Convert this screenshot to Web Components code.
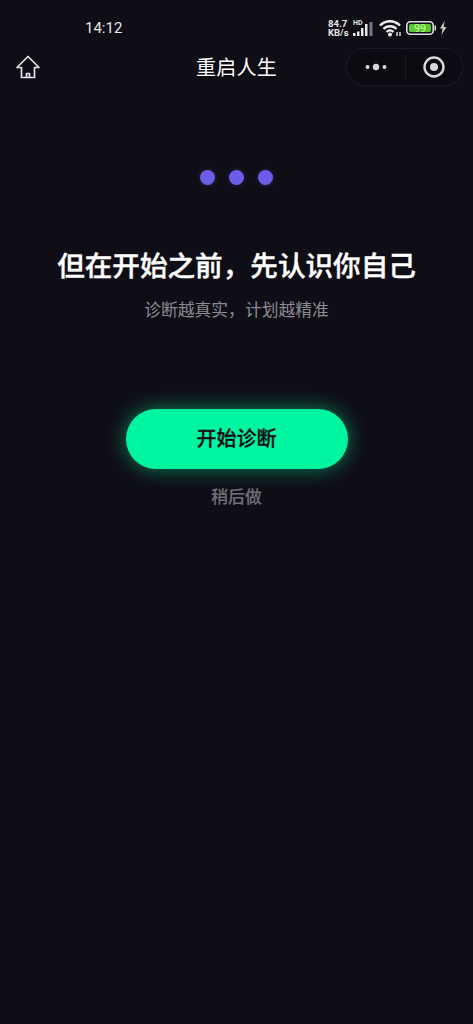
<!DOCTYPE html>
<html lang="zh">
<head>
<meta charset="utf-8">
<title>重启人生</title>
<style>
    html, body {
        margin: 0;
        height: 100%;
        background: #0f0e16;
        font-family: "Noto Sans CJK SC", "Liberation Sans", sans-serif;
    }
</style>
</head>
<body>
<intro-page>
    <status-bar time="14:12"></status-bar>
    <nav-bar title="重启人生"></nav-bar>
    <step-dots></step-dots>
    <h-title>但在开始之前，先认识你自己</h-title>
    <sub-title>诊断越真实，计划越精准</sub-title>
    <start-button>开始诊断</start-button>
    <later-link>稍后做</later-link>
</intro-page>

<script>
window.customElements.define("intro-page", class IntroPage extends HTMLElement {
    constructor() {
        super();
        this.attachShadow({ mode: "open" });
        this.shadowRoot.innerHTML = `
            <style>
                :host {
                    display: flex;
                    flex-direction: column;
                    align-items: stretch;
                    width: 473px;
                    height: 1024px;
                    overflow: hidden;
                    background: #0f0e16;
                }
            </style>
            <slot></slot>
        `;
    };
});

window.customElements.define("status-bar", class StatusBar extends HTMLElement {
    constructor() {
        super();
        this.attachShadow({ mode: "open" });
        this.shadowRoot.innerHTML = `
            <style>
                :host {
                    display: flex;
                    align-items: center;
                    height: 43px;
                    padding: 12px 0 0 85px;
                    box-sizing: border-box;
                    color: #e6e6e8;
                    font-family: Roboto, "Liberation Sans", sans-serif;
                }
                .time { font-size: 15px; width: 243px; }
                .speed { font-size: 9.500px; font-weight: 700; line-height: 9px; width: 25px; }
                svg { display: block; }
            </style>
            <span class="time">${this.getAttribute("time")}</span>
            <span class="speed">84.7<br>KB/s</span>
            <svg width="22" height="18" viewBox="0 0 22 18">
                <text x="0" y="6" font-size="7" font-weight="700" fill="#e6e6e8" font-family="Roboto, sans-serif">HD</text>
                <g fill="#e6e6e8">
                    <rect x="0" y="14" width="2.500" height="3"/>
                    <rect x="4" y="12.500" width="2.500" height="4.500"/>
                    <rect x="8" y="9" width="2.500" height="8"/>
                    <rect x="12" y="5" width="2.500" height="12"/>
                    <rect x="16.500" y="3" width="3" height="14" fill="#77777c"/>
                </g>
            </svg>
            <svg width="24" height="18" viewBox="0 0 24 18" style="margin-left:4px">
                <g fill="none" stroke="#f0f0f2" stroke-width="2.400">
                    <path d="M1 6.500 A14 14 0 0 1 21 6.500"/>
                    <path d="M4.500 10 A9 9 0 0 1 17.500 10"/>
                    <path d="M7.500 13 A5 5 0 0 1 14.500 13"/>
                </g>
                <circle cx="11" cy="15.500" r="2" fill="#f0f0f2"/>
                <path d="M18 17V13M21 17V13" stroke="#d8d8da" stroke-width="1.500"/>
            </svg>
            <svg width="30" height="14" viewBox="0 0 30 14" style="margin-left:3px">
                <rect x="0.800" y="0.800" width="26.400" height="12.400" rx="3.500" fill="none" stroke="#e0e0e2" stroke-width="1.600"/>
                <rect x="3" y="3" width="22" height="8" rx="1.500" fill="#55c92e"/>
                <text x="14" y="10.800" font-size="10.500" text-anchor="middle" fill="#d4f7a0" font-family="Roboto, sans-serif">99</text>
                <rect x="28.500" y="4.500" width="1.500" height="5" fill="#d8d8da"/>
            </svg>
            <svg width="8" height="14" viewBox="0 0 8 14" style="margin-left:3px">
                <path d="M5.500 0 L1 7.500 H3.500 L2.500 14 L7.500 6 H4.800 Z" fill="#c8c8ca"/>
            </svg>
        `;
    };
});

window.customElements.define("nav-bar", class NavBar extends HTMLElement {
    constructor() {
        super();
        this.attachShadow({ mode: "open" });
        this.shadowRoot.innerHTML = `
            <style>
                :host {
                    display: grid;
                    grid-template-columns: 1fr auto 1fr;
                    align-items: center;
                    height: 48px;
                    padding: 0 10px;
                    color: #fff;
                }
                .home { margin-left: 6px; }
                .title { font-size: 20px; line-height: 24px; letter-spacing: 0.2px; }
                .capsule {
                    justify-self: end;
                    display: flex;
                    align-items: center;
                    width: 117px;
                    height: 38px;
                    box-sizing: border-box;
                    border: 1px solid #1c1b25;
                    border-radius: 19px;
                    background: #0c0b12;
                }
                .capsule > div { display: flex; justify-content: center; align-items: center; }
                .more { width: 58px; }
                .sep { width: 1px; height: 24px; background: #1c1b25; }
                .close { flex: 1; }
                svg { display: block; }
            </style>
            <svg class="home" width="24" height="24" viewBox="0 0 24 24" fill="none" stroke="#e4e4e8" stroke-width="1.700" stroke-linejoin="round">
                <path d="M12 1.500 L23 12.500 H18.500 V22.500 H5.500 V12.500 H1 Z"/>
                <path d="M10.500 22.500 V18.500 H13.500 V22.500"/>
            </svg>
            <span class="title">${this.getAttribute("title")}</span>
            <div class="capsule">
                <div class="more">
                    <svg width="24" height="8" viewBox="0 0 24 8" fill="#d8d8dc">
                        <circle cx="3.500" cy="4" r="2"/>
                        <circle cx="12" cy="4" r="3.200"/>
                        <circle cx="20.500" cy="4" r="2"/>
                    </svg>
                </div>
                <div class="sep"></div>
                <div class="close">
                    <svg width="22" height="22" viewBox="0 0 22 22">
                        <circle cx="11" cy="11" r="9.500" fill="none" stroke="#d8d8dc" stroke-width="2.400"/>
                        <circle cx="11" cy="11" r="4" fill="#d8d8dc"/>
                    </svg>
                </div>
            </div>
        `;
    };
});

window.customElements.define("step-dots", class StepDots extends HTMLElement {
    constructor() {
        super();
        this.attachShadow({ mode: "open" });
        this.shadowRoot.innerHTML = `
            <style>
                :host {
                    display: flex;
                    justify-content: center;
                    gap: 14px;
                    margin-top: 79px;
                }
                i {
                    width: 15px;
                    height: 15px;
                    border-radius: 50%;
                    background: #6c5ce7;
                    box-shadow: 0 0 5px rgba(108, 92, 231, 0.3);
                }
            </style>
            <i></i><i></i><i></i>
        `;
    };
});

window.customElements.define("h-title", class HTitle extends HTMLElement {
    constructor() {
        super();
        this.attachShadow({ mode: "open" });
        this.shadowRoot.innerHTML = `
            <style>
                :host {
                    display: block;
                    margin-top: 59px;
                    text-align: center;
                    color: #fff;
                    font-size: 27.600px;
                    font-weight: 500;
                    -webkit-text-stroke: 0.4px #fff;
                    line-height: 40px;
                }
            </style>
            <slot></slot>
        `;
    };
});

window.customElements.define("sub-title", class SubTitle extends HTMLElement {
    constructor() {
        super();
        this.attachShadow({ mode: "open" });
        this.shadowRoot.innerHTML = `
            <style>
                :host {
                    display: block;
                    margin-top: 13px;
                    text-align: center;
                    color: #8c8b92;
                    font-size: 16.800px;
                    line-height: 24px;
                }
            </style>
            <slot></slot>
        `;
    };
});

window.customElements.define("start-button", class StartButton extends HTMLElement {
    constructor() {
        super();
        this.attachShadow({ mode: "open" });
        this.shadowRoot.innerHTML = `
            <style>
                :host {
                    display: flex;
                    align-self: center;
                    align-items: center;
                    justify-content: center;
                    width: 222px;
                    height: 60px;
                    padding-bottom: 3px;
                    box-sizing: border-box;
                    margin-top: 88px;
                    border-radius: 30px;
                    background: #00f5a0;
                    box-shadow: 0 0 20px rgba(0, 245, 160, 0.5);
                    color: #0f0e16;
                    font-size: 20px;
                    font-weight: 500;
                    -webkit-text-stroke: 0.3px #0f0e16;
                }
            </style>
            <slot></slot>
        `;
    };
});

window.customElements.define("later-link", class LaterLink extends HTMLElement {
    constructor() {
        super();
        this.attachShadow({ mode: "open" });
        this.shadowRoot.innerHTML = `
            <style>
                :host {
                    display: block;
                    margin-top: 15px;
                    text-align: center;
                    color: #706f77;
                    font-size: 16.800px;
                    font-weight: 500;
                    -webkit-text-stroke: 0.2px #706f77;
                    line-height: 24px;
                }
            </style>
            <slot></slot>
        `;
    };
});
</script>
</body>
</html>
